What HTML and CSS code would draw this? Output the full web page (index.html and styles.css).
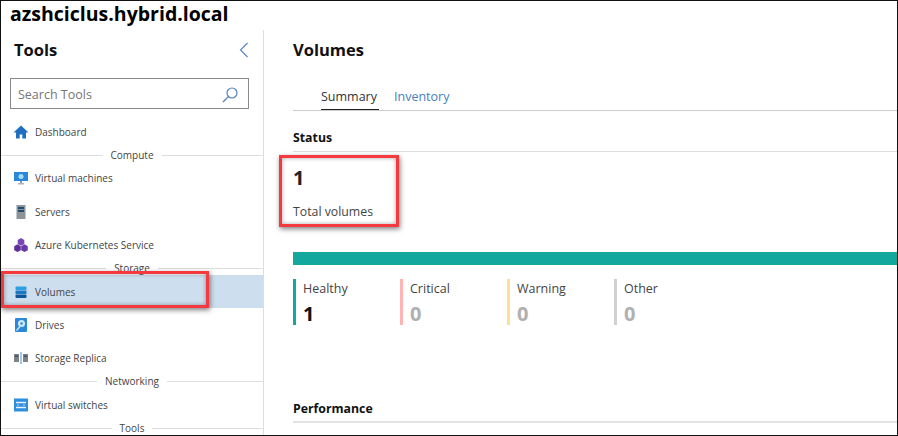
FILE: index.html
```html
<!DOCTYPE html>
<html lang="en">
<head>
  <meta charset="UTF-8">
  <title>Volumes</title>
  <link rel="stylesheet" href="styles.css">
</head>
<body>
  <div class="frame">
    <h1 class="server-name">azshciclus.hybrid.local</h1>
    <div class="layout">

      <aside class="sidebar">
        <div class="sidebar-head">
          <h2>Tools</h2>
          <svg class="collapse" width="10" height="16" viewBox="0 0 10 16"><path d="M8.500 1 1.500 8l7 7" fill="none" stroke="#5b86c0" stroke-width="1.200"/></svg>
        </div>
        <div class="search">
          <span>Search Tools</span>
          <svg width="18" height="18" viewBox="0 0 18 18"><circle cx="11" cy="7" r="5" fill="none" stroke="#4f81bd" stroke-width="1.200"/><path d="M7.400 10.600 2 16" stroke="#4f81bd" stroke-width="1.300"/></svg>
        </div>

        <div class="tool">
          <svg width="16" height="16" viewBox="0 0 16 16"><path d="M8 1.500 0.500 8.500h2.500V14.500h3.700V10.500h2.600v4h3.700V8.500h2.500z" fill="#1f6fc0"/></svg>
          <span>Dashboard</span>
        </div>
        <div class="group"><span>Compute</span></div>
        <div class="tool tool-vm">
          <svg width="16" height="16" viewBox="0 0 16 16"><rect x="1" y="2" width="14" height="9" fill="#2b88d8"/><circle cx="8" cy="6.500" r="2.500" fill="#a6dcf5"/><rect x="7" y="11" width="2" height="2" fill="#8a9aa8"/><rect x="5" y="13" width="6" height="1.500" fill="#a9b5bf"/></svg>
          <span>Virtual machines</span>
        </div>
        <div class="tool">
          <svg width="16" height="16" viewBox="0 0 16 16"><rect x="3.500" y="1" width="9" height="14" fill="#8d9499"/><rect x="5" y="3" width="6" height="2" fill="#1d4f76"/><rect x="5" y="6" width="6" height="2" fill="#1d4f76"/></svg>
          <span>Servers</span>
        </div>
        <div class="tool">
          <svg width="16" height="16" viewBox="0 0 16 16"><path d="M8 1 11.300 2.900V6.900L8 8.800 4.700 6.900V2.900z" fill="#7a45b5"/><path d="M4.500 7.300 7.800 9.200V13.200L4.500 15.100 1.200 13.200V9.200z" fill="#5e2f9c"/><path d="M11.500 7.300 14.800 9.200V13.200L11.500 15.100 8.200 13.200V9.200z" fill="#6a38a8"/></svg>
          <span>Azure Kubernetes Service</span>
        </div>
        <div class="group"><span>Storage</span></div>
        <div class="tool tool-active">
          <svg width="16" height="16" viewBox="0 0 16 16"><rect x="2.500" y="2.500" width="11" height="3.500" rx="1" fill="#2b9fe0"/><rect x="2.500" y="6.500" width="11" height="3.500" fill="#1b78c4"/><rect x="2.500" y="10.500" width="11" height="3.500" rx="1" fill="#0f5796"/></svg>
          <span>Volumes</span>
        </div>
        <div class="tool">
          <svg width="16" height="16" viewBox="0 0 16 16"><rect x="2" y="1" width="12" height="14" rx="1" fill="#2b88d8"/><circle cx="8.500" cy="6.500" r="3.500" fill="#cfe9f8"/><circle cx="8.500" cy="6.500" r="1.200" fill="#2b88d8"/><path d="M3.500 13.500 7 9.500" stroke="#cfe9f8" stroke-width="1.400"/></svg>
          <span>Drives</span>
        </div>
        <div class="tool">
          <svg width="16" height="16" viewBox="0 0 16 16"><rect x="1" y="4" width="5" height="8" fill="#7d8389"/><rect x="10" y="4" width="5" height="8" fill="#7d8389"/><rect x="2" y="5.500" width="3" height="1.500" fill="#33536e"/><rect x="11" y="5.500" width="3" height="1.500" fill="#33536e"/><rect x="7.500" y="2" width="1" height="12" fill="#4f94d4"/></svg>
          <span>Storage Replica</span>
        </div>
        <div class="group"><span>Networking</span></div>
        <div class="tool">
          <svg width="16" height="16" viewBox="0 0 16 16"><rect x="1" y="1.500" width="14" height="13" fill="#2f8fdf"/><path d="M3 5.500h10M3 10.500h10" stroke="#e4f2fb" stroke-width="1.400"/><path d="M5 7.500v1M11 7.500v1" stroke="#e4f2fb" stroke-width="1.400"/></svg>
          <span>Virtual switches</span>
        </div>
        <div class="group"><span>Tools</span></div>
      </aside>

      <main class="content">
        <h2 class="page-title">Volumes</h2>
        <div class="tabs">
          <span class="tab tab-active">Summary</span>
          <span class="tab">Inventory</span>
        </div>

        <h3 class="section-title">Status</h3>
        <div class="total">
          <div class="total-num">1</div>
          <div class="total-label">Total volumes</div>
        </div>

        <div class="health-bar"></div>
        <div class="stats">
          <div class="stat stat-healthy"><div class="stat-name">Healthy</div><div class="stat-num">1</div></div>
          <div class="stat stat-critical"><div class="stat-name">Critical</div><div class="stat-num">0</div></div>
          <div class="stat stat-warning"><div class="stat-name">Warning</div><div class="stat-num">0</div></div>
          <div class="stat stat-other"><div class="stat-name">Other</div><div class="stat-num">0</div></div>
        </div>

        <h3 class="section-title perf">Performance</h3>
      </main>

    </div>
  </div>
</body>
</html>
```

FILE: styles.css
```css
html, body {
  margin: 0;
  padding: 0;
  height: 100%;
}

body {
  font-family: "Open Sans", "Noto Sans", sans-serif;
  background: #fff;
  color: #333;
  overflow: hidden;
}

.frame {
  box-sizing: border-box;
  height: 436px;
  border: 1px solid #111;
  overflow: hidden;
}

.server-name {
  margin: 0;
  padding-left: 9px;
  height: 29px;
  line-height: 25px;
  font-size: 19.500px;
  font-weight: 700;
  color: #000;
}

.layout {
  display: flex;
  height: 405px;
}

/* sidebar */
.sidebar {
  width: 262px;
  flex: none;
  border-right: 1px solid #ddd;
}

.sidebar-head {
  display: flex;
  justify-content: space-between;
  align-items: center;
  box-sizing: border-box;
  height: 41px;
  padding: 0 14px 2px 13px;
}

.sidebar-head h2 {
  margin: 0;
  font-size: 16.500px;
  font-weight: 700;
  color: #111;
}

.search {
  display: flex;
  justify-content: space-between;
  align-items: center;
  box-sizing: border-box;
  width: 239px;
  height: 31px;
  margin: 7px 0 0 9px;
  padding: 2px 9px 0 7px;
  border: 1px solid #8a8a8a;
  font-size: 12.500px;
  color: #767676;
}

.tool {
  display: flex;
  align-items: center;
  gap: 6px;
  height: 33px;
  padding-left: 12px;
  font-size: 10px;
  color: #444;
}

.tool svg {
  flex: none;
}

.search + .tool {
  margin-top: 6px;
}

.tool-vm {
  padding-bottom: 2px;
  box-sizing: border-box;
}

.tool-active {
  background: #cddeee;
}

.group {
  display: flex;
  align-items: center;
  height: 14px;
  margin-right: 4px;
  font-size: 10px;
  color: #444;
}

.group::before,
.group::after {
  content: "";
  height: 1px;
  background: #ddd;
  flex: 1;
}

.group::after {
  margin-right: -4px;
}

.group span {
  padding: 0 8px;
}

/* main */
.content {
  flex: 1;
  min-width: 0;
  padding-left: 29px;
}

.page-title {
  margin: 0;
  height: 42px;
  line-height: 40px;
  font-size: 16.500px;
  font-weight: 700;
  color: #111;
}

.tabs {
  display: flex;
  gap: 15px;
  height: 39px;
  padding-left: 28px;
  border-bottom: 1px solid #ccc;
  box-sizing: border-box;
}

.tab {
  font-size: 12.500px;
  line-height: 16px;
  padding-top: 17px;
  color: #4a7ebb;
}

.tab-active {
  color: #333;
  padding-right: 2px;
  border-bottom: 1px solid #222;
}

.section-title {
  margin: 0;
  padding: 19px 0 5px;
  line-height: 16px;
  font-size: 12.300px;
  font-weight: 700;
  color: #111;
  border-bottom: 1px solid #ddd;
}

.total {
  box-sizing: border-box;
  height: 100px;
  padding-top: 12px;
}

.total-num {
  font-size: 20px;
  line-height: 28px;
  font-weight: 700;
  color: #222;
}

.total-label {
  margin-top: 12px;
  font-size: 12.300px;
  line-height: 16px;
  color: #444;
}

.health-bar {
  height: 13px;
  background: #13a89e;
}

.stats {
  display: flex;
  margin-top: 14px;
}

.stat {
  width: 107px;
  height: 46px;
  box-sizing: border-box;
  padding: 2px 0 0 7px;
  border-left: 3px solid #ccc;
}

.stat-healthy { border-color: #13a89e; }
.stat-critical { border-color: #ffb3b3; }
.stat-warning { border-color: #ffdf96; }
.stat-other { border-color: #d0d0d0; }

.stat-name {
  font-size: 12.500px;
  line-height: 16px;
  color: #444;
}

.stat-num {
  margin-top: 4px;
  font-size: 20px;
  line-height: 26px;
  font-weight: 700;
  color: #b0b0b0;
}

.stat-healthy .stat-num {
  color: #111;
}

.perf {
  margin-top: 57px;
  padding-bottom: 4px;
  border-bottom: 2px solid #e3e3e3;
}

/* red callouts laid over the screenshot */
.tool-active,
.total {
  position: relative;
}

.tool-active::after {
  content: "";
  position: absolute;
  left: 0;
  top: -4px;
  width: 202px;
  height: 31px;
  border: 3px solid #f5393f;
  box-shadow: 1px 2px 5px rgba(0, 0, 0, 0.5), inset 0 0 4px rgba(0, 0, 0, 0.35);
  pointer-events: none;
}

.total::after {
  content: "";
  position: absolute;
  left: -14px;
  top: 3px;
  width: 114px;
  height: 66px;
  border: 3px solid #f5393f;
  box-shadow: 1px 2px 5px rgba(0, 0, 0, 0.5), inset 0 0 4px rgba(0, 0, 0, 0.35);
  pointer-events: none;
}
```
